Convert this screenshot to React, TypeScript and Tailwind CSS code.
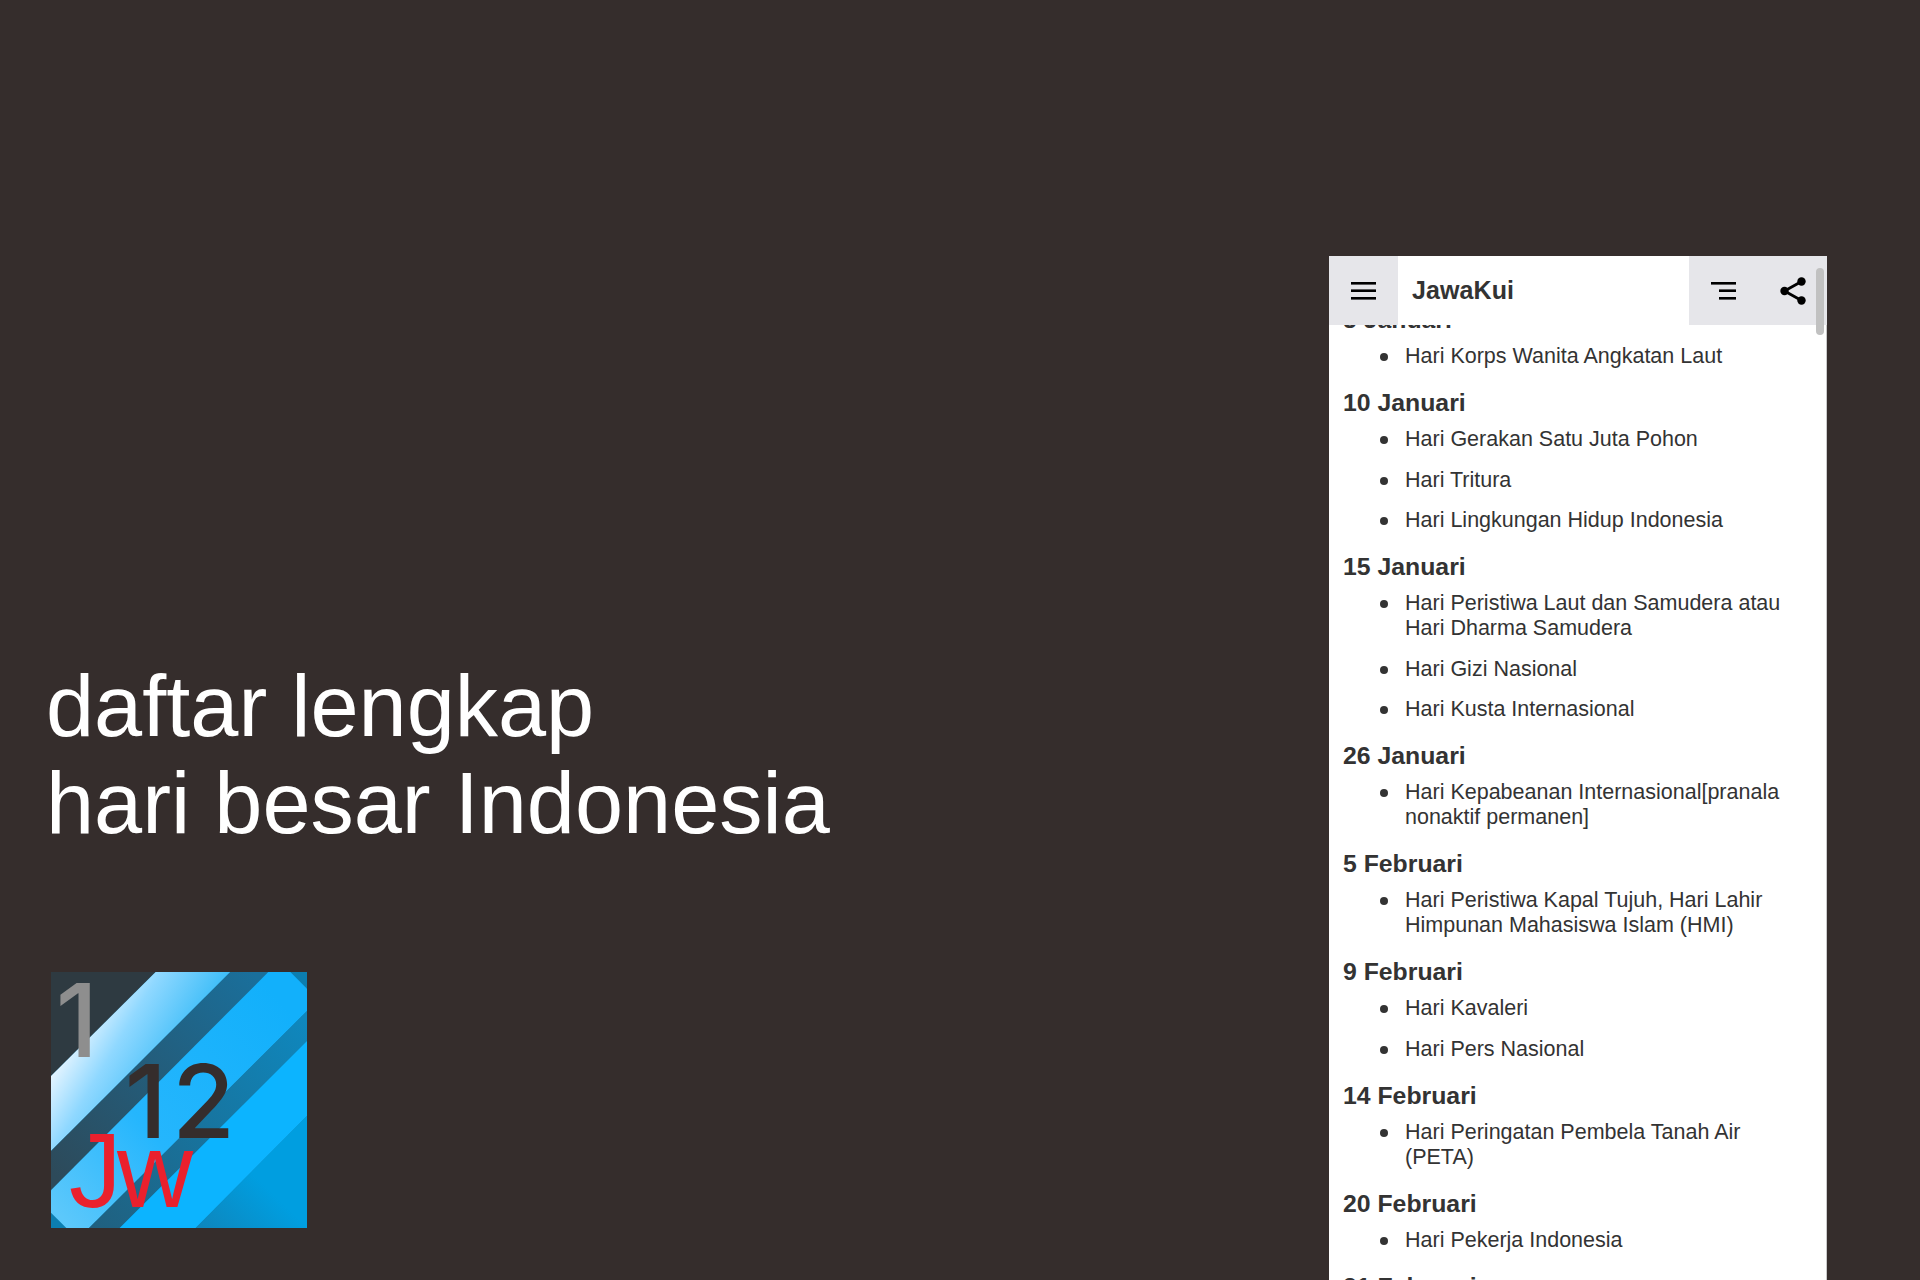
const days = [
  { date: "5 Januari", items: ["Hari Korps Wanita Angkatan Laut"] },
  { date: "10 Januari", items: ["Hari Gerakan Satu Juta Pohon", "Hari Tritura", "Hari Lingkungan Hidup Indonesia"] },
  { date: "15 Januari", items: ["Hari Peristiwa Laut dan Samudera atau Hari Dharma Samudera", "Hari Gizi Nasional", "Hari Kusta Internasional"] },
  { date: "26 Januari", items: ["Hari Kepabeanan Internasional[pranala nonaktif permanen]"] },
  { date: "5 Februari", items: ["Hari Peristiwa Kapal Tujuh, Hari Lahir Himpunan Mahasiswa Islam (HMI)"] },
  { date: "9 Februari", items: ["Hari Kavaleri", "Hari Pers Nasional"] },
  { date: "14 Februari", items: ["Hari Peringatan Pembela Tanah Air (PETA)"] },
  { date: "20 Februari", items: ["Hari Pekerja Indonesia"] },
  { date: "21 Februari", items: ["Hari Peduli Sampah Nasional"] },
];

function Logo() {
  return (
    <svg width="256" height="256" viewBox="0 0 768 768" className="block">
      <defs>
        <linearGradient id="band1" x1="0" y1="312" x2="258" y2="467" gradientUnits="userSpaceOnUse">
          <stop offset="0" stopColor="#e4f4ff" />
          <stop offset="0.4" stopColor="#8fd8ff" />
          <stop offset="1" stopColor="#3dbdf8" />
        </linearGradient>
        <linearGradient id="band2" x1="0" y1="600" x2="600" y2="0" gradientUnits="userSpaceOnUse">
          <stop offset="0" stopColor="#2d4a5a" />
          <stop offset="1" stopColor="#1a6f9b" />
        </linearGradient>
        <linearGradient id="band3" x1="0" y1="700" x2="700" y2="100" gradientUnits="userSpaceOnUse">
          <stop offset="0" stopColor="#5cc8fb" />
          <stop offset="0.4" stopColor="#25b6fd" />
          <stop offset="1" stopColor="#12b0fb" />
        </linearGradient>
        <linearGradient id="band4" x1="120" y1="768" x2="768" y2="160" gradientUnits="userSpaceOnUse">
          <stop offset="0" stopColor="#20607f" />
          <stop offset="1" stopColor="#0f87bd" />
        </linearGradient>
        <linearGradient id="corner" x1="434" y1="768" x2="600" y2="600" gradientUnits="userSpaceOnUse">
          <stop offset="0" stopColor="#0e85bb" />
          <stop offset="1" stopColor="#009ee0" />
        </linearGradient>
      </defs>
      <rect width="768" height="768" fill="#0c7eb0" />
      <polygon points="0,0 314,0 0,312" fill="#2e3a41" />
      <polygon points="314,0 538,0 0,537 0,312" fill="url(#band1)" />
      <polygon points="538,0 652,0 0,655 0,537" fill="url(#band2)" />
      <polygon points="652,0 718,0 768,50 768,117 114,768 46,768 0,722 0,655" fill="url(#band3)" />
      <polygon points="768,117 768,207 206,768 114,768" fill="url(#band4)" />
      <polygon points="768,207 768,432 434,768 206,768" fill="#0cb4ff" />
      <polygon points="768,432 768,768 434,768" fill="url(#corner)" />
      <g>
        <text x="14" y="254" fontSize="305" fontWeight="500" fill="#8e8e8e" fontFamily="Inter, sans-serif">1</text>
        <text x="221" y="497" fontSize="305" fontWeight="500" letterSpacing="16" fill="#352d2c" fontFamily="Inter, sans-serif">12</text>
        <text x="54" y="704" fontSize="316" letterSpacing="-14" fill="#ea202d" fontFamily="'Liberation Sans', Arial, sans-serif">Jw</text>
      </g>
    </svg>
  );
}

export default function App() {
  return (
    <div className="h-[1280px] w-[1920px] overflow-hidden bg-[#352d2c] flex justify-between font-['Liberation_Sans',Arial,sans-serif]">
      {/* Left side */}
      <div className="flex flex-col pl-[46px] pt-[658px]">
        <h1 className="text-[86.5px] leading-[97px] font-normal text-white">
          daftar lengkap
          <br />
          hari besar Indonesia
        </h1>
        <div className="mt-[120px] ml-[5px]">
          <Logo />
        </div>
      </div>

      {/* Phone panel */}
      <div className="relative mt-[256px] mr-[93px] h-[1024px] w-[498px] overflow-hidden bg-white text-[#333333]">
        <div className="absolute top-0 left-0 right-0 z-10 flex h-[69px] items-center bg-white">
          <button className="flex h-[69px] w-[69px] items-center justify-center bg-[#e6e6ea]">
            <svg width="25" height="18" viewBox="0 0 25 18" fill="#000000">
              <rect y="0" width="25" height="2.6" />
              <rect y="7.4" width="25" height="2.6" />
              <rect y="15" width="25" height="2.6" />
            </svg>
          </button>
          <div className="flex-1 pl-[14px] text-[25px] leading-none font-bold tracking-[0.1px]">JawaKui</div>
          <button className="flex h-[69px] w-[69px] items-center justify-center bg-[#e6e6ea]">
            <svg width="25" height="18" viewBox="0 0 25 18" fill="#000000">
              <rect y="0" width="25" height="2.6" />
              <rect x="8" y="7.4" width="17" height="2.6" />
              <rect x="8" y="15" width="17" height="2.6" />
            </svg>
          </button>
          <button className="flex h-[69px] w-[69px] items-center justify-center bg-[#e6e6ea]">
            <svg width="26" height="28" viewBox="0 0 26 28" fill="#000000">
              <circle cx="21.5" cy="4.5" r="4.2" />
              <circle cx="4.5" cy="14" r="4.2" />
              <circle cx="21.5" cy="23.5" r="4.2" />
              <path d="M4.5 14 21.5 4.5M4.5 14l17 9.5" stroke="#000000" strokeWidth="2.8" fill="none" />
            </svg>
          </button>
        </div>
        <div className="absolute top-[12px] right-[3px] z-20 h-[67px] w-[8px] rounded-full bg-[#c1c1c1]" />

        <div className="h-full border-r border-[#c9c9c9] pt-[51px] pl-[14px] pr-[24px]">
          {days.map((day) => (
            <section key={day.date} className="mb-[21px]">
              <h2 className="mb-[12px] text-[24.8px] leading-[25px] font-bold">{day.date}</h2>
              <ul className="flex flex-col gap-[15.5px] pl-[37px] text-[21.5px] leading-[25px]">
                {day.items.map((item) => (
                  <li key={item} className="flex gap-[17px]">
                    <span className="mt-[9px] h-[8px] w-[8px] shrink-0 rounded-full bg-[#333333]" />
                    <span>{item}</span>
                  </li>
                ))}
              </ul>
            </section>
          ))}
        </div>
      </div>
    </div>
  );
}
